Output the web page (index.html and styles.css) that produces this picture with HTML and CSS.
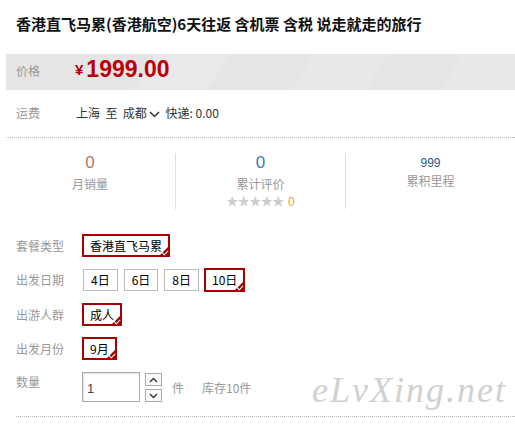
FILE: index.html
```html
<!DOCTYPE html>
<html lang="zh-CN">
<head>
<meta charset="utf-8">
<title>香港直飞马累</title>
<link rel="stylesheet" href="styles.css">
</head>
<body>
<div class="page">
  <h1 class="title">香港直飞马累(香港航空)6天往返 含机票 含税 说走就走的旅行</h1>

  <div class="price-bar">
    <span class="price-label">价格</span>
    <span class="price"><span class="yen">¥</span>1999.00</span>
  </div>

  <div class="freight">
    <span class="label">运费</span>
    <span class="freight-val">上海&nbsp;&nbsp;至&nbsp;&nbsp;成都<svg class="chev" width="11" height="7" viewBox="0 0 11 7"><path d="M1 1 L5.5 5.5 L10 1" fill="none" stroke="#333" stroke-width="1.5"/></svg> 快递: 0.00</span>
  </div>

  <div class="stats">
    <div class="stat">
      <div class="num brown">0</div>
      <div class="stat-label">月销量</div>
    </div>
    <div class="stat">
      <div class="num blue">0</div>
      <div class="stat-label">累计评价</div>
      <div class="stars">★★★★★ <span class="zero">0</span></div>
    </div>
    <div class="stat third">
      <div class="num small">999</div>
      <div class="stat-label">累积里程</div>
    </div>
  </div>

  <div class="options">
    <div class="opt-row">
      <span class="opt-label">套餐类型</span>
      <div class="choices">
        <span class="choice sel">香港直飞马累</span>
      </div>
    </div>
    <div class="opt-row">
      <span class="opt-label">出发日期</span>
      <div class="choices">
        <span class="choice">4日</span>
        <span class="choice">6日</span>
        <span class="choice">8日</span>
        <span class="choice sel">10日</span>
      </div>
    </div>
    <div class="opt-row">
      <span class="opt-label">出游人群</span>
      <div class="choices">
        <span class="choice sel">成人</span>
      </div>
    </div>
    <div class="opt-row">
      <span class="opt-label">出发月份</span>
      <div class="choices">
        <span class="choice sel">9月</span>
      </div>
    </div>
    <div class="opt-row qty-row">
      <span class="opt-label qty-label">数量</span>
      <div class="qty-input">1</div>
      <div class="spin">
        <span class="spin-btn"><svg width="9" height="6" viewBox="0 0 9 6"><path d="M1 5 L4.5 1.5 L8 5" fill="none" stroke="#333" stroke-width="1.4"/></svg></span>
        <span class="spin-btn"><svg width="9" height="6" viewBox="0 0 9 6"><path d="M1 1 L4.5 4.5 L8 1" fill="none" stroke="#333" stroke-width="1.4"/></svg></span>
      </div>
      <span class="unit">件</span>
      <span class="stock">库存10件</span>
    </div>
  </div>

  <div class="watermark">eLvXing.net</div>
</div>
</body>
</html>
```

FILE: styles.css
```css
* { box-sizing: border-box; }
html, body { margin: 0; padding: 0; background: #fff; }
body {
  font-family: "Noto Sans CJK SC", "Liberation Sans", sans-serif;
  font-size: 12px;
  color: #333;
}
.page { position: relative; width: 515px; height: 426px; overflow: hidden; }

.title {
  margin: 0;
  padding: 14px 0 0 16px;
  font-size: 15px;
  line-height: 20px;
  font-weight: bold;
  color: #111;
  white-space: nowrap;
}

.price-bar {
  margin: 20px 0 0 6px;
  height: 36px;
  display: flex;
  align-items: center;
  padding: 0 0 3px 10px;
  background:
    linear-gradient(120deg, rgba(255,255,255,0) 0 28%, rgba(255,255,255,0.18) 28% 42%, rgba(255,255,255,0) 42% 58%, rgba(255,255,255,0.16) 58% 72%, rgba(255,255,255,0) 72% 86%, rgba(255,255,255,0.16) 86% 100%),
    #e5e5e5;
}
.price-label { width: 59px; color: #999; line-height: 20px; }
.price {
  font-family: "Liberation Sans", Arial, sans-serif;
  font-weight: bold;
  font-size: 23px;
  color: #b8000a;
  line-height: 26px;
}
.yen { font-size: 15px; margin-right: 3px; position: relative; top: -2px; }

.freight {
  margin: 13px 0 0 6px;
  padding: 0 0 14px 10px;
  display: flex;
  line-height: 20px;
  border-bottom: 1px dotted #b5b5b5;
}
.freight .label { width: 60px; color: #999; }
.freight-val { color: #333; white-space: nowrap; }
.chev { margin: 0 3px 1px 2px; vertical-align: middle; }

.stats {
  margin: 15px 0 0 5px;
  display: grid;
  grid-template-columns: 170px 170px 170px;
  height: 55px;
}
.stat { text-align: center; }
.stat + .stat { border-left: 1px solid #ddd; }
.num {
  font-family: "Liberation Sans", Arial, sans-serif;
  font-size: 17px;
  line-height: 20px;
}
.brown { color: #a6805f; }
.blue { color: #3a7db3; }
.num.small { font-size: 12px; line-height: 16px; color: #2d5a8a; }
.third { padding-top: 2px; }
.stat-label { color: #999; line-height: 20px; margin-top: 1px; }
.third .stat-label { margin-top: 0; }
.stars { color: #ccc; font-size: 12px; line-height: 14px; letter-spacing: -0.5px; }
.stars .zero { color: #f0a030; font-family: "Liberation Sans", Arial, sans-serif; letter-spacing: 0; margin-left: 2px; }

.options { margin-top: 26px; padding-left: 16px; }
.opt-row { display: flex; align-items: center; margin-bottom: 11px; min-height: 23px; }
.opt-label { width: 66px; color: #999; line-height: 20px; flex: none; }
.choices { display: flex; gap: 4px; }
.choice {
  position: relative;
  display: inline-block;
  border: 1px solid #bbb;
  margin: 1px;
  padding: 0 7px;
  line-height: 20px;
  color: #000;
  white-space: nowrap;
}
.choice.sel {
  border: 2px solid #a40000;
  margin: 0;
  padding: 0 6px;
  line-height: 19px;
}
.choice.sel::after {
  content: "";
  position: absolute;
  right: -2px;
  bottom: -2px;
  width: 0;
  height: 0;
  border-style: solid;
  border-width: 0 0 12px 12px;
  border-color: transparent transparent #a40000 transparent;
}
.choice.sel::before {
  content: "";
  position: absolute;
  right: 0px;
  bottom: 1px;
  width: 5px;
  height: 3px;
  border-left: 1.4px solid #fff;
  border-bottom: 1.4px solid #fff;
  transform: rotate(-45deg);
  z-index: 1;
}

.qty-row { align-items: flex-start; margin-bottom: 0; }
.qty-label { margin-top: 1px; }
.qty-input {
  width: 58px;
  height: 30px;
  margin-top: 1px;
  border: 1px solid #aaa;
  box-shadow: inset 1px 1px 2px rgba(0,0,0,0.12);
  padding: 8px 0 0 4px;
  font-family: "Liberation Sans", Arial, sans-serif;
  font-size: 13px;
  line-height: 16px;
  color: #5a3a4a;
}
.spin { display: flex; flex-direction: column; gap: 3px; margin: 2px 0 0 5px; }
.spin-btn {
  width: 17px;
  height: 13px;
  border: 1px solid #aaa;
  background: #fafafa;
  display: flex;
  align-items: center;
  justify-content: center;
}
.unit { margin: 7px 0 0 10px; color: #999; line-height: 20px; }
.stock { margin: 7px 0 0 18px; color: #999; line-height: 20px; }

.options::after {
  content: "";
  display: block;
  margin-top: 14px;
  border-bottom: 1px dotted #b5b5b5;
}

.watermark {
  position: absolute;
  left: 312px;
  top: 370px;
  font-family: "Liberation Serif", serif;
  font-style: italic;
  font-size: 36px;
  letter-spacing: 2px;
  color: #d0d0d0;
  line-height: 40px;
}
```
